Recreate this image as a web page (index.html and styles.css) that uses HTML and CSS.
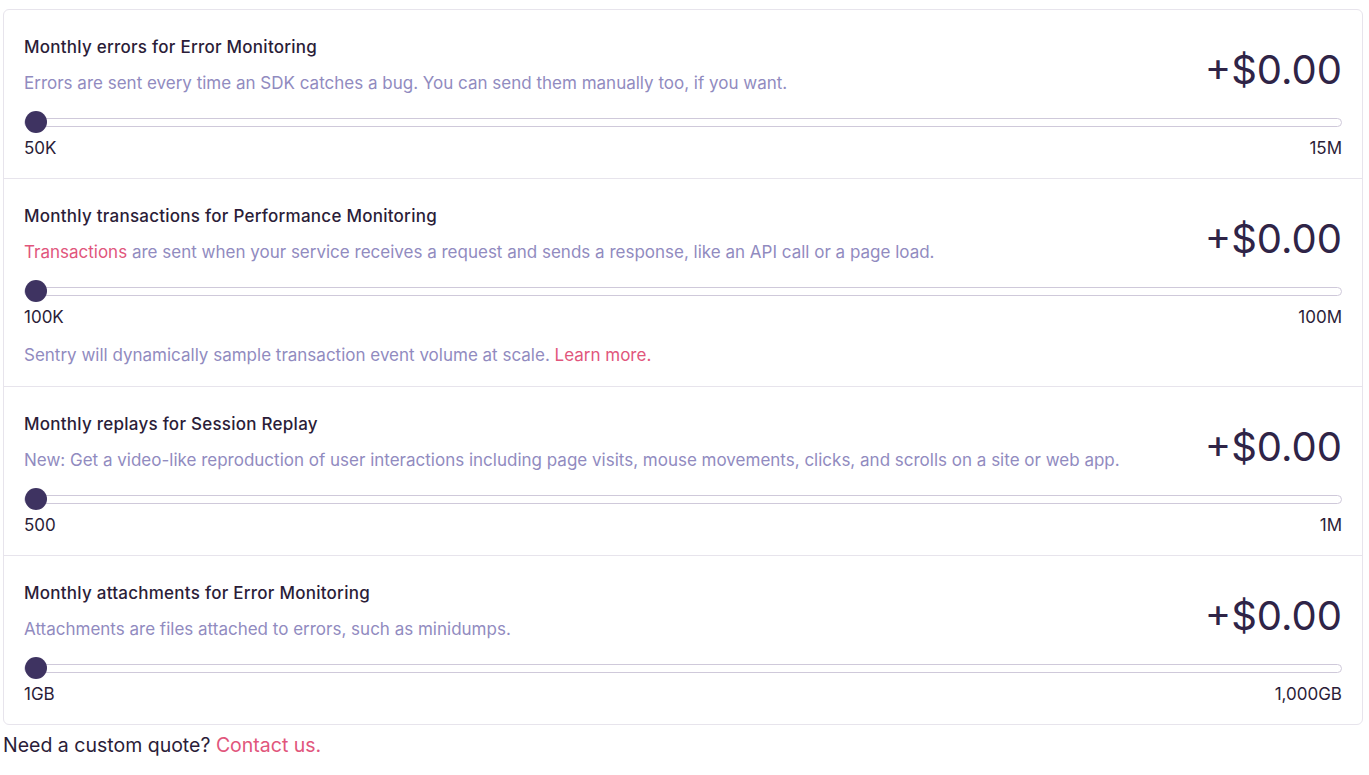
FILE: index.html
```html
<!DOCTYPE html>
<html lang="en">
<head>
    <meta charset="UTF-8">
    <meta name="viewport" content="width=device-width, initial-scale=1.0">
    <title>Volume</title>
    <link rel="stylesheet" href="styles.css">
</head>
<body>
    <div class="volume-card">
        <div class="volume-row">
            <div class="volume-head">
                <div class="volume-text">
                    <div class="volume-title">Monthly errors for Error Monitoring</div>
                    <div class="volume-desc">Errors are sent every time an SDK catches a bug. You can send them manually too, if you want.</div>
                </div>
                <div class="volume-price">+$0.00</div>
            </div>
            <input type="range" class="volume-slider" min="0" max="100" value="0">
            <div class="volume-range">
                <span>50K</span>
                <span>15M</span>
            </div>
        </div>

        <div class="volume-row">
            <div class="volume-head">
                <div class="volume-text">
                    <div class="volume-title">Monthly transactions for Performance Monitoring</div>
                    <div class="volume-desc"><a href="#">Transactions</a> are sent when your service receives a request and sends a response, like an API call or a page load.</div>
                </div>
                <div class="volume-price">+$0.00</div>
            </div>
            <input type="range" class="volume-slider" min="0" max="100" value="0">
            <div class="volume-range">
                <span>100K</span>
                <span>100M</span>
            </div>
            <div class="volume-note">Sentry will dynamically sample transaction event volume at scale. <a href="#">Learn more.</a></div>
        </div>

        <div class="volume-row">
            <div class="volume-head">
                <div class="volume-text">
                    <div class="volume-title">Monthly replays for Session Replay</div>
                    <div class="volume-desc">New: Get a video-like reproduction of user interactions including page visits, mouse movements, clicks, and scrolls on a site or web app.</div>
                </div>
                <div class="volume-price">+$0.00</div>
            </div>
            <input type="range" class="volume-slider" min="0" max="100" value="0">
            <div class="volume-range">
                <span>500</span>
                <span>1M</span>
            </div>
        </div>

        <div class="volume-row">
            <div class="volume-head">
                <div class="volume-text">
                    <div class="volume-title">Monthly attachments for Error Monitoring</div>
                    <div class="volume-desc">Attachments are files attached to errors, such as minidumps.</div>
                </div>
                <div class="volume-price">+$0.00</div>
            </div>
            <input type="range" class="volume-slider" min="0" max="100" value="0">
            <div class="volume-range">
                <span>1GB</span>
                <span>1,000GB</span>
            </div>
        </div>
    </div>
    <p class="custom-quote">Need a custom quote? <a href="#">Contact us.</a></p>
</body>
</html>
```

FILE: styles.css
```css
body {
    margin: 0;
    padding: 9px 6px 0 3px;
    background: #fff;
    font-family: 'Inter', 'Open Sans', sans-serif;
    color: #2b1d38;
}
a {
    color: #e1567c;
    text-decoration: none;
}
.volume-card {
    border: 1px solid #e7e4ec;
    border-radius: 6px;
}
.volume-row {
    padding: 25px 20px 19px;
    border-top: 1px solid #e7e4ec;
}
.volume-row:first-child {
    border-top: none;
}
.volume-head {
    display: flex;
    justify-content: space-between;
    align-items: flex-end;
    gap: 20px;
}
.volume-title {
    font-size: 17px;
    font-weight: 500;
    line-height: 24px;
    letter-spacing: 0.25px;
}
.volume-desc {
    margin-top: 12px;
    font-size: 17px;
    line-height: 24px;
    color: #918bbf;
}
.volume-price {
    font-size: 40px;
    line-height: 48px;
    margin-bottom: 1px;
    white-space: nowrap;
    color: #2f2447;
}
.volume-slider {
    -webkit-appearance: none;
    appearance: none;
    display: block;
    width: 100%;
    height: 22px;
    margin: 16px 0 0;
    background: transparent;
}
.volume-slider::-webkit-slider-runnable-track {
    height: 9px;
    box-sizing: border-box;
    border: 1px solid #cfc9da;
    border-radius: 5px;
    background: #fff;
}
.volume-slider::-webkit-slider-thumb {
    -webkit-appearance: none;
    width: 22px;
    height: 22px;
    margin-top: -7.5px;
    border-radius: 50%;
    background: #3e3361;
    border: none;
}
.volume-range {
    display: flex;
    justify-content: space-between;
    margin-top: 4px;
    font-size: 17px;
    line-height: 22px;
}
.volume-note {
    margin-top: 15px;
    font-size: 17px;
    line-height: 24px;
    color: #918bbf;
}
.custom-quote {
    margin: 7px 0 0;
    font-size: 19.5px;
    line-height: 26px;
}
```
